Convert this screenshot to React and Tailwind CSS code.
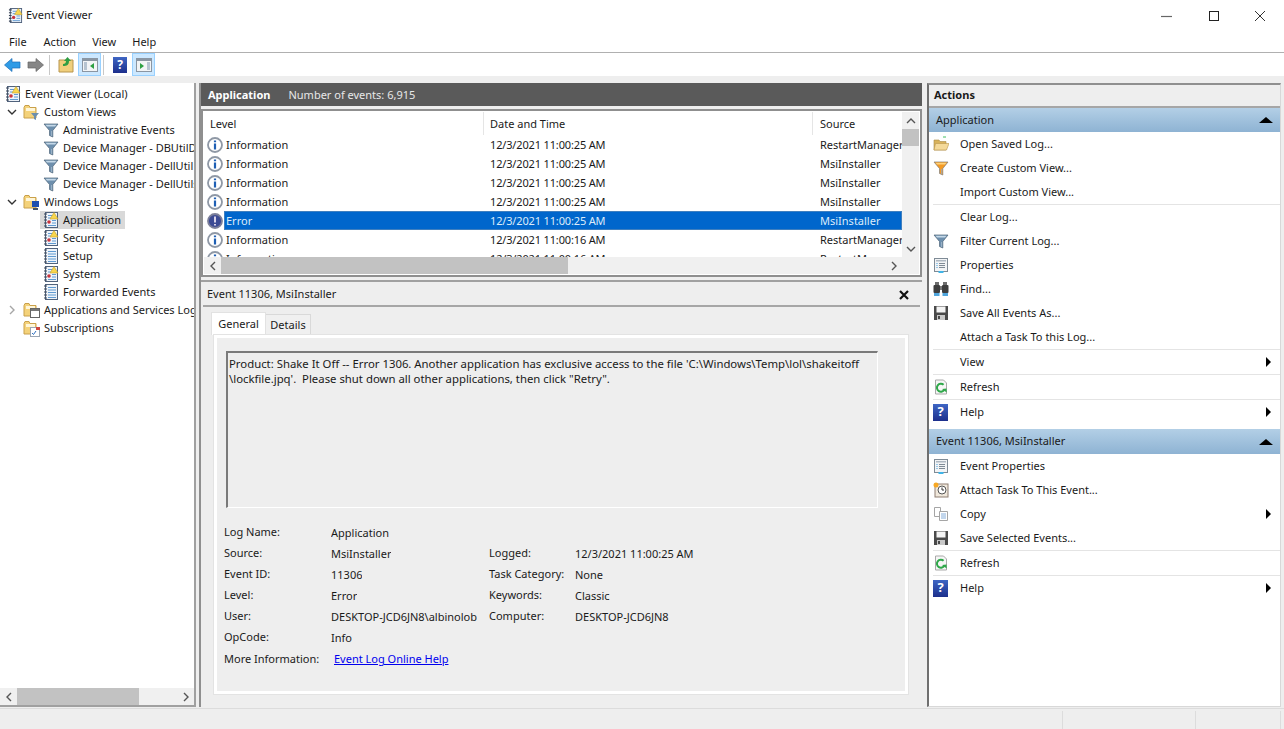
import { Fragment } from "react";

const LOG_ROWS = [
  ["Information", "12/3/2021 11:00:25 AM", "RestartManager"],
  ["Information", "12/3/2021 11:00:25 AM", "MsiInstaller"],
  ["Information", "12/3/2021 11:00:25 AM", "MsiInstaller"],
  ["Information", "12/3/2021 11:00:25 AM", "MsiInstaller"],
  ["Error", "12/3/2021 11:00:25 AM", "MsiInstaller"],
  ["Information", "12/3/2021 11:00:16 AM", "RestartManager"],
  ["Information", "12/3/2021 11:00:16 AM", "RestartManager"],
];

function LogIcon({ warn = true, size = 16 }) {
  return (
    <svg width={size} height={size} viewBox="0 0 16 16" className="shrink-0">
      <rect x="2.5" y="0.5" width="12" height="15" fill="#eef3f9" stroke="#50627c" />
      <path d="M5 3.5h8M5 6h8M5 8.5h8M5 11h8M5 13.5h8" stroke="#5f9ad2" strokeWidth="1" />
      <path d="M1 2h3M1 5h3M1 8h3M1 11h3M1 14h3" stroke="#3b4658" strokeWidth="1.2" />
      {warn && (
        <Fragment>
          <rect x="4" y="7.5" width="5" height="5" fill="#eef3f9" />
          <circle cx="6" cy="10" r="1.8" fill="#c8333d" />
          <path d="M11 0.5l4 6.5H7z" fill="#f8d64e" stroke="#c9a227" strokeWidth="0.6" />
        </Fragment>
      )}
    </svg>
  );
}

function Folder({ children }) {
  return (
    <svg width="17" height="17" viewBox="0 0 17 17" className="shrink-0">
      <path d="M1 3.5V14h12V3.5H7L6 1.5H2z" fill="#f4d27a" stroke="#c9a04a" />
      <rect x="3" y="4" width="9" height="3" fill="#fff6d8" />
      {children}
    </svg>
  );
}

function Funnel({ size = 16, orange = false }) {
  return (
    <svg width={size} height={size} viewBox="0 0 16 16" className="shrink-0">
      <path d="M1 2h14L9.8 8.5V15l-3.3-1.5V8.5z" fill={orange ? "#f49a24" : "#6d8fad"} stroke={orange ? "#7d7d7d" : "#4d6478"} strokeWidth="0.7" />
      <path d="M2.5 2.7h11L12 4.5H4z" fill={orange ? "#ffd27a" : "#c4d8e8"} />
      <path d="M8.6 9v5" stroke={orange ? "#a7a7a7" : "#9fb6c9"} />
    </svg>
  );
}

function HelpIcon({ size = 15 }) {
  return (
    <div
      className="flex shrink-0 items-center justify-center bg-gradient-to-b from-[#3f66c4] to-[#1d2f8c] font-bold text-white"
      style={{ width: size, height: size + 2, fontSize: size - 2 }}
    >
      ?
    </div>
  );
}

function PropsIcon() {
  return (
    <svg width="16" height="16" viewBox="0 0 16 16" className="shrink-0">
      <rect x="1.5" y="1.5" width="13" height="13" fill="#f2f4f6" stroke="#7f8b96" />
      <rect x="3" y="3" width="10" height="1.5" fill="#aeb8c2" />
      <path d="M6 6.5h6M6 8.5h6M6 10.5h6" stroke="#7f8b96" />
      <path d="M3.5 6.5h1M3.5 8.5h1M3.5 10.5h1" stroke="#3f9bd8" />
      <rect x="5.5" y="14" width="5" height="2" fill="#3fb4e8" />
    </svg>
  );
}

function SaveIcon() {
  return (
    <svg width="16" height="16" viewBox="0 0 16 16" className="shrink-0">
      <path d="M1 1h14v14H1z" fill="#4a4a4a" />
      <rect x="3.5" y="1.5" width="9" height="6" fill="#f4f4f4" />
      <rect x="4" y="10" width="8" height="5" fill="#c9c9c9" />
      <rect x="5" y="11" width="2" height="3" fill="#4a4a4a" />
    </svg>
  );
}

function RefreshIcon() {
  return (
    <svg width="16" height="16" viewBox="0 0 16 16" className="shrink-0">
      <path d="M2.5 1h8l3 3v11h-11z" fill="#f6f6f6" stroke="#a9a9a9" />
      <path d="M11.5 10.5A4 4 0 1 1 10.6 5.7" fill="none" stroke="#2fa84a" strokeWidth="2" />
      <path d="M9 10l4.5-.5.2 4z" fill="#2fa84a" />
    </svg>
  );
}

function OpenIcon() {
  return (
    <svg width="16" height="16" viewBox="0 0 16 16" className="shrink-0">
      <path d="M1 4h5l1 1.5h6V14H1z" fill="#d8b25a" stroke="#a98a45" strokeWidth="0.6" />
      <path d="M2.5 7.5H16L13.5 14H1z" fill="#f4d998" stroke="#b8954c" strokeWidth="0.6" />
      <path d="M10 1h3" stroke="#45c060" />
    </svg>
  );
}

function BinocularsIcon() {
  return (
    <svg width="16" height="16" viewBox="0 0 16 16" className="shrink-0">
      <rect x="2" y="1" width="4" height="4" fill="#6d6d6d" />
      <rect x="10" y="1" width="4" height="4" fill="#6d6d6d" />
      <rect x="0.5" y="4" width="6.5" height="8" rx="1" fill="#3e3e3e" />
      <rect x="9" y="4" width="6.5" height="8" rx="1" fill="#3e3e3e" />
      <rect x="7" y="5" width="2" height="4" fill="#7c7c7c" />
      <rect x="1" y="12" width="5.5" height="3" fill="#4fa5dc" />
      <rect x="9.5" y="12" width="5.5" height="3" fill="#4fa5dc" />
    </svg>
  );
}

function TaskIcon() {
  return (
    <svg width="16" height="16" viewBox="0 0 16 16" className="shrink-0">
      <rect x="2" y="2" width="13" height="13" fill="#f0e8dc" stroke="#8f7f72" />
      <circle cx="9" cy="8" r="4" fill="#fff" stroke="#555" />
      <path d="M9 5.5V8h2" stroke="#333" fill="none" />
      <circle cx="3" cy="3" r="2.5" fill="#f7a823" />
    </svg>
  );
}

function CopyIcon() {
  return (
    <svg width="16" height="16" viewBox="0 0 16 16" className="shrink-0">
      <path d="M1.5 1.5h6v9h-6z" fill="#fff" stroke="#a5a5a5" />
      <path d="M6.5 5.5h8v9h-8z" fill="#fff" stroke="#a5a5a5" />
      <path d="M8 8h5M8 10h5M8 12h5" stroke="#86aeda" />
    </svg>
  );
}

function InfoIcon({ error }) {
  return (
    <svg width="16" height="16" viewBox="0 0 16 16" className="shrink-0">
      <circle cx="8" cy="8" r="7" fill={error ? "#3c4a94" : "#fff"} stroke={error ? "#7c7f99" : "#8f98a5"} strokeWidth="1.8" />
      {error ? (
        <path d="M8 3.5v6M8 11v1.6" stroke="#e9e2f2" strokeWidth="1.8" />
      ) : (
        <path d="M8 3.4v1.8M8 6.6v5.8" stroke="#1e5fb4" strokeWidth="2.2" />
      )}
    </svg>
  );
}

function PaneToggle({ variant }) {
  return (
    <div className="flex h-[23px] w-[23px] items-center justify-center border border-[#99d1ff] bg-[#cce8ff]">
      <svg width="16" height="14" viewBox="0 0 16 14">
        <rect x="0.5" y="0.5" width="15" height="13" fill="#f2f4f6" stroke="#8a96a3" />
        <rect x="1" y="1" width="14" height="2" fill="#8a96a3" />
        {variant === "left" ? (
          <Fragment>
            <path d="M2 5h3M2 7h3M2 9h3M2 11h3" stroke="#7a93ac" />
            <path d="M12 5v6L8 8z" fill="#2ea043" />
          </Fragment>
        ) : (
          <Fragment>
            <path d="M11 5h3M11 7h3M11 9h3M11 11h3" stroke="#7a93ac" />
            <path d="M4 5v6l4-3z" fill="#2ea043" />
          </Fragment>
        )}
      </svg>
    </div>
  );
}

function Chevron({ dir }) {
  const d = { down: "M1 3l4 4 4-4", right: "M3 1l4 4-4 4", left: "M7 1L3 5l4 4", up: "M1 7l4-4 4 4" }[dir];
  return (
    <svg width="10" height="10" viewBox="0 0 10 10" className="shrink-0">
      <path d={d} fill="none" stroke="currentColor" strokeWidth="1.4" />
    </svg>
  );
}

function TreeRow({ pad, arrow, icon, label, selected }) {
  return (
    <div className={`flex h-[18px] items-center whitespace-nowrap ${pad}`}>
      {arrow === "down" && (
        <span className="mr-[3px] ml-[7px] text-[#333]">
          <Chevron dir="down" />
        </span>
      )}
      {arrow === "right" && (
        <span className="mr-[3px] ml-[7px] text-[#a6a6a6]">
          <Chevron dir="right" />
        </span>
      )}
      <span className={`flex h-[18px] items-center pr-[4px] pl-[3px] ${selected ? "bg-[#d9d9d9]" : ""}`}>
        {icon}
        <span className="pl-[4px]">{label}</span>
      </span>
    </div>
  );
}

function LeftTree() {
  return (
    <div className="flex w-[196px] shrink-0 flex-col border-r-2 border-b-2 border-[#a0a0a0] bg-white">
      <div className="min-h-0 flex-1 overflow-hidden pt-[2px]">
        <TreeRow pad="pl-[2px]" icon={<LogIcon />} label="Event Viewer (Local)" />
        <TreeRow
          pad=""
          arrow="down"
          icon={
            <Folder>
              <path d="M8 9h8l-3 3.5V16l-2-1v-2.5z" fill="#6d8fad" />
            </Folder>
          }
          label="Custom Views"
        />
        <TreeRow pad="pl-[40px]" icon={<Funnel />} label="Administrative Events" />
        <TreeRow pad="pl-[40px]" icon={<Funnel />} label="Device Manager - DBUtilDrv" />
        <TreeRow pad="pl-[40px]" icon={<Funnel />} label="Device Manager - DellUtil" />
        <TreeRow pad="pl-[40px]" icon={<Funnel />} label="Device Manager - DellUtils" />
        <TreeRow
          pad=""
          arrow="down"
          icon={
            <Folder>
              <rect x="9" y="7" width="7" height="6" fill="#1d4fb0" />
              <rect x="10" y="14" width="5" height="2" fill="#45556b" />
            </Folder>
          }
          label="Windows Logs"
        />
        <TreeRow pad="pl-[40px]" icon={<LogIcon />} label="Application" selected />
        <TreeRow pad="pl-[40px]" icon={<LogIcon />} label="Security" />
        <TreeRow pad="pl-[40px]" icon={<LogIcon warn={false} />} label="Setup" />
        <TreeRow pad="pl-[40px]" icon={<LogIcon />} label="System" />
        <TreeRow pad="pl-[40px]" icon={<LogIcon warn={false} />} label="Forwarded Events" />
        <TreeRow
          pad=""
          arrow="right"
          icon={
            <Folder>
              <rect x="7.5" y="6.5" width="9" height="9" fill="#fff" stroke="#666" />
              <rect x="8" y="7" width="8" height="2" fill="#777" />
            </Folder>
          }
          label="Applications and Services Logs"
        />
        <TreeRow
          pad="pl-[20px]"
          icon={
            <Folder>
              <rect x="7.5" y="7.5" width="9" height="9" fill="#fff" stroke="#9aa6b5" />
              <rect x="13" y="7" width="4" height="3" fill="#d0453c" />
              <path d="M9 13l1.5 1.5L13 11" fill="none" stroke="#2d6fc0" />
            </Folder>
          }
          label="Subscriptions"
        />
      </div>
      <div className="flex h-[17px] shrink-0 items-center bg-[#f0f0f0]">
        <span className="flex w-[17px] justify-center text-[#555]">
          <Chevron dir="left" />
        </span>
        <div className="h-[17px] w-[122px] bg-[#c2c2c2]" />
        <div className="flex-1" />
        <span className="flex w-[17px] justify-center text-[#555]">
          <Chevron dir="right" />
        </span>
      </div>
    </div>
  );
}

function EventList() {
  return (
    <div className="flex h-[168px] shrink-0 flex-col border-2 border-[#8f8f8f] bg-white p-px">
      <div className="flex min-h-0 flex-1">
        <div className="min-w-0 flex-1 overflow-hidden">
          <div className="flex h-[23px] items-center">
            <div className="flex h-full w-[280px] items-center border-r border-[#e5e5e5] pt-[1px] pl-[6px]">Level</div>
            <div className="flex h-full w-[329px] items-center border-r border-[#e5e5e5] pt-[1px] pl-[6px]">Date and Time</div>
            <div className="flex h-full flex-1 items-center pt-[1px] pl-[7px]">Source</div>
          </div>
          {LOG_ROWS.map((row, i) => {
            const isError = row[0] === "Error";
            return (
              <div key={i} className="flex h-[19px] items-center">
                <div className="flex w-[20px] shrink-0 justify-center pl-[1px]">
                  <InfoIcon error={isError} />
                </div>
                <div
                  className={`flex h-[19px] min-w-0 flex-1 items-center whitespace-nowrap pt-[1px] ${
                    isError ? "bg-[#0066cc] text-[#dcebfa] outline outline-[#3f7fbf] -outline-offset-1" : ""
                  }`}
                >
                  <div className="w-[264px] shrink-0 pl-[2px]">{row[0]}</div>
                  <div className="w-[330px] shrink-0 pl-[2px] tracking-[-0.15px]">{row[1]}</div>
                  <div className="min-w-0 flex-1 overflow-hidden pl-[2px]">{row[2]}</div>
                </div>
              </div>
            );
          })}
        </div>
        <div className="flex w-[17px] shrink-0 flex-col items-center bg-[#f0f0f0] text-[#555]">
          <div className="flex h-[17px] items-center">
            <Chevron dir="up" />
          </div>
          <div className="h-[17px] w-full bg-[#c2c2c2]" />
          <div className="flex-1" />
          <div className="flex h-[17px] items-center">
            <Chevron dir="down" />
          </div>
        </div>
      </div>
      <div className="flex h-[17px] shrink-0 items-center bg-[#f0f0f0] text-[#555]">
        <span className="flex w-[17px] justify-center">
          <Chevron dir="left" />
        </span>
        <div className="h-[17px] w-[347px] bg-[#c2c2c2]" />
        <div className="flex-1" />
        <span className="flex w-[17px] justify-center">
          <Chevron dir="right" />
        </span>
        <div className="w-[17px]" />
      </div>
    </div>
  );
}

function Field({ label, value, labelWidth }) {
  return (
    <div className="flex h-[21px] items-center whitespace-nowrap">
      <div className={`shrink-0 pb-[2px] ${labelWidth}`}>{label}</div>
      <div className="min-w-0 overflow-hidden">{value}</div>
    </div>
  );
}

function EventDetail() {
  return (
    <div className="flex min-h-0 flex-1 flex-col border-t-2 border-[#a0a0a0] bg-[#eeeeee] pt-[2px]">
      <div className="mx-[2px] flex h-[23px] shrink-0 items-center justify-between border-b-2 border-[#a6a6a6] pr-[11px] pl-[4px]">
        <span>Event 11306, MsiInstaller</span>
        <svg width="10" height="10" viewBox="0 0 10 10">
          <path d="M1 1l8 8M9 1l-8 8" stroke="#111" strokeWidth="2.2" />
        </svg>
      </div>
      <div className="flex min-h-0 flex-1 flex-col pt-[5px] pr-[14px] pb-[13px] pl-[10px]">
        <div className="flex h-[23px] shrink-0 items-end">
          <div className="flex h-[23px] w-[55px] items-center justify-center border border-b-0 border-[#e2e2e2] bg-white">General</div>
          <div className="flex h-[21px] w-[45px] items-center justify-center border border-b-0 border-l-0 border-[#d9d9d9] bg-[#f0f0f0]">Details</div>
        </div>
        <div className="ml-[3px] flex min-h-0 flex-1 flex-col border-[3px] border-white bg-[#eeeeee] pt-[13px] pr-[27px] pl-[9px] outline outline-[#e3e3e3]">
          <div className="h-[157px] shrink-0 border-t-2 border-r border-b border-l-2 border-t-[#7a7a7a] border-r-[#ffffff] border-b-[#ffffff] border-l-[#7a7a7a] pt-[3px] pl-[1px] text-[11.35px] leading-[15px]">
            Product: Shake It Off -- Error 1306. Another application has exclusive access to the file 'C:\Windows\Temp\lol\shakeitoff
            <br />
            \lockfile.jpq'.&nbsp; Please shut down all other applications, then click "Retry".
          </div>
          <div className="mt-[15px] -ml-[2px] flex">
            <div className="w-[257px] shrink-0">
              <Field label="Log Name:" value="Application" labelWidth="w-[107px]" />
              <Field label="Source:" value="MsiInstaller" labelWidth="w-[107px]" />
              <Field label="Event ID:" value="11306" labelWidth="w-[107px]" />
              <Field label="Level:" value="Error" labelWidth="w-[107px]" />
              <Field label="User:" value="DESKTOP-JCD6JN8\albinolob" labelWidth="w-[107px]" />
              <Field label="OpCode:" value="Info" labelWidth="w-[107px]" />
              <div className="flex h-[21px] items-center whitespace-nowrap">
                <div className="w-[110px] shrink-0">More Information:</div>
                <a className="text-[#0000ee] underline">Event Log Online Help</a>
              </div>
            </div>
            <div className="ml-[8px] pt-[21px]">
              <Field label="Logged:" value="12/3/2021 11:00:25 AM" labelWidth="w-[86px]" />
              <Field label="Task Category:" value="None" labelWidth="w-[86px]" />
              <Field label="Keywords:" value="Classic" labelWidth="w-[86px]" />
              <Field label="Computer:" value="DESKTOP-JCD6JN8" labelWidth="w-[86px]" />
            </div>
          </div>
        </div>
      </div>
    </div>
  );
}

function ActionRow({ icon, label, arrow }) {
  return (
    <div className="flex h-[24px] items-center whitespace-nowrap pr-[9px]">
      <div className="flex w-[31px] shrink-0 justify-start pl-[4px]">{icon}</div>
      <span className="flex-1">{label}</span>
      {arrow && <div className="h-0 w-0 border-y-[5px] border-l-[5px] border-y-transparent border-l-black" />}
    </div>
  );
}

function Sep() {
  return <div className="ml-[4px] h-px bg-[#e4e4e4]" />;
}

function ActionHeader({ label, height }) {
  return (
    <div className={`flex shrink-0 items-center justify-between bg-gradient-to-b from-[#b3cfe6] to-[#8eb3d3] pr-[7px] pl-[7px] ${height}`}>
      <span>{label}</span>
      <div className="h-0 w-0 border-x-[7px] border-b-[6px] border-x-transparent border-b-black" />
    </div>
  );
}

function ActionsPane() {
  return (
    <div className="ml-[5px] flex w-[354px] shrink-0 flex-col border-t-2 border-r border-b border-l-2 border-t-[#8f8f8f] border-r-[#d8d8d8] border-b-[#d8d8d8] border-l-[#6f6f6f] bg-white">
      <div className="flex h-[23px] shrink-0 items-center border-b-2 border-[#a6a6a6] bg-[#eeeeee] pl-[5px] font-bold">Actions</div>
      <ActionHeader label="Application" height="h-[24px]" />
      <ActionRow icon={<OpenIcon />} label="Open Saved Log..." />
      <ActionRow icon={<Funnel orange />} label="Create Custom View..." />
      <ActionRow label="Import Custom View..." />
      <Sep />
      <ActionRow label="Clear Log..." />
      <ActionRow icon={<Funnel />} label="Filter Current Log..." />
      <ActionRow icon={<PropsIcon />} label="Properties" />
      <ActionRow icon={<BinocularsIcon />} label="Find..." />
      <ActionRow icon={<SaveIcon />} label="Save All Events As..." />
      <ActionRow label="Attach a Task To this Log..." />
      <Sep />
      <ActionRow label="View" arrow />
      <Sep />
      <ActionRow icon={<RefreshIcon />} label="Refresh" />
      <Sep />
      <ActionRow icon={<HelpIcon />} label="Help" arrow />
      <div className="h-[5px]" />
      <ActionHeader label="Event 11306, MsiInstaller" height="h-[25px]" />
      <ActionRow icon={<PropsIcon />} label="Event Properties" />
      <ActionRow icon={<TaskIcon />} label="Attach Task To This Event..." />
      <ActionRow icon={<CopyIcon />} label="Copy" arrow />
      <ActionRow icon={<SaveIcon />} label="Save Selected Events..." />
      <Sep />
      <ActionRow icon={<RefreshIcon />} label="Refresh" />
      <Sep />
      <ActionRow icon={<HelpIcon />} label="Help" arrow />
    </div>
  );
}

export default function App() {
  return (
    <div className="flex h-[729px] w-[1284px] flex-col overflow-hidden bg-[#eeeeee] font-['Noto_Sans',sans-serif] text-[11px] text-[#1a1a1a]">
      {/* title bar */}
      <div className="flex h-[31px] shrink-0 items-center bg-white pl-[8px]">
        <LogIcon size={15} />
        <span className="ml-[3px] flex-1">Event Viewer</span>
        <svg width="12" height="12" viewBox="0 0 12 12" className="mr-[35px]">
          <path d="M0 6.5h11" stroke="#666" strokeWidth="1.2" />
        </svg>
        <svg width="12" height="12" viewBox="0 0 12 12" className="mr-[34px]">
          <rect x="1.5" y="1.5" width="9" height="9" fill="none" stroke="#222" />
        </svg>
        <svg width="12" height="12" viewBox="0 0 12 12" className="mr-[18px]">
          <path d="M1 1l10 10M11 1L1 11" stroke="#333" />
        </svg>
      </div>
      {/* menu */}
      <div className="flex h-[22px] shrink-0 items-center gap-[16px] border-b border-[#b0b0b0] bg-white pt-[1px] pl-[9px]">
        <span className="mr-[1px]">File</span>
        <span>Action</span>
        <span>View</span>
        <span>Help</span>
      </div>
      {/* toolbar */}
      <div className="flex h-[23px] shrink-0 items-center bg-white pl-[4px]">
        <svg width="17" height="14" viewBox="0 0 17 14">
          <path d="M8 0.5v3.5h8v6H8v3.5L0.5 7z" fill="#2f9be6" stroke="#1d6fb8" strokeWidth="0.7" />
        </svg>
        <svg width="17" height="14" viewBox="0 0 17 14" className="ml-[6px]">
          <path d="M9 0.5v3.5H1v6h8v3.5L16.5 7z" fill="#868686" stroke="#666" strokeWidth="0.7" />
        </svg>
        <div className="mr-[8px] ml-[5px] h-[20px] w-px bg-[#c8c8c8]" />
        <svg width="17" height="17" viewBox="0 0 17 17">
          <path d="M1 4h14v12H1z" fill="#f0cf7c" stroke="#b8954c" />
          <path d="M5 8c2 0 3-1 3-3H6l3.5-4L13 5h-2c0 4-2 5-6 5z" fill="#2f9e44" />
        </svg>
        <div className="ml-[3px]">
          <PaneToggle variant="left" />
        </div>
        <div className="mr-[9px] ml-[2px] h-[20px] w-px bg-[#c8c8c8]" />
        <HelpIcon size={14} />
        <div className="ml-[5px]">
          <PaneToggle variant="right" />
        </div>
      </div>
      <div className="h-[7px] shrink-0" />
      {/* main */}
      <div className="flex h-[624px] shrink-0">
        <LeftTree />
        <div className="ml-[3px] flex w-[723px] shrink-0 flex-col border-l-2 border-[#8f8f8f] bg-[#eeeeee]">
          <div className="flex h-[23px] shrink-0 items-center gap-[18px] bg-[#5a5a5a] pt-[1px] pl-[7px] text-[#e8e8e8]">
            <span className="font-bold text-white">Application</span>
            <span>Number of events: 6,915</span>
          </div>
          <div className="h-[3px] shrink-0" />
          <EventList />
          <div className="h-[3px] shrink-0" />
          <EventDetail />
        </div>
        <ActionsPane />
      </div>
      {/* status bar */}
      <div className="mt-px flex flex-1 border-t border-[#dcdcdc] pt-[2px] pr-[3px]">
        <div className="flex-1 border-r border-[#dcdcdc]" />
        <div className="w-[133px] border-r border-[#dcdcdc]" />
        <div className="w-[85px] border-r border-[#dcdcdc]" />
      </div>
    </div>
  );
}
